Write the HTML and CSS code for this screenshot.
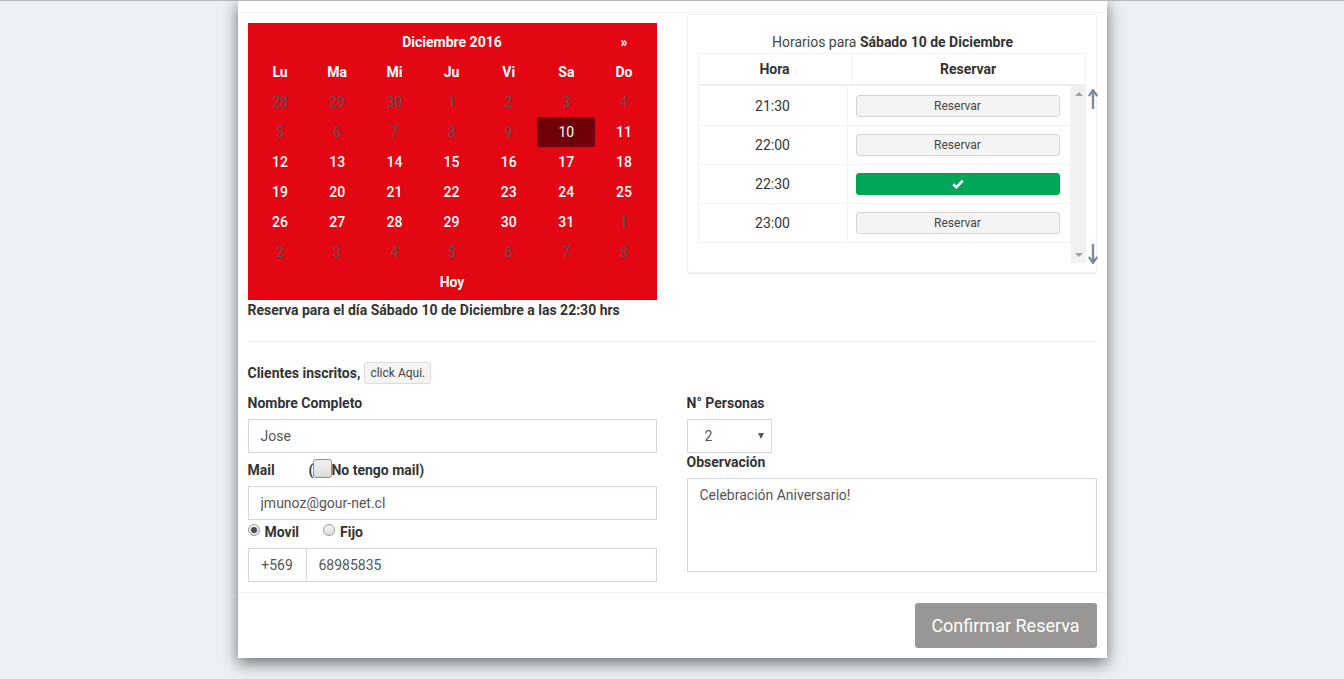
FILE: index.html
```html
<!DOCTYPE html>
<html lang="es">
<head>
<meta charset="utf-8">
<title>Reserva</title>
<link rel="stylesheet" href="styles.css">
</head>
<body>
<div class="modal">
  <div class="modal-header"></div>
  <div class="modal-body">
    <div class="top-row">
      <div class="col-left">
        <div class="calendar">
          <div class="cal-cell"></div>
          <div class="cal-title">Diciembre 2016</div>
          <div class="cal-cell cal-nav">»</div>

          <div class="cal-cell dow">Lu</div><div class="cal-cell dow">Ma</div><div class="cal-cell dow">Mi</div><div class="cal-cell dow">Ju</div><div class="cal-cell dow">Vi</div><div class="cal-cell dow">Sa</div><div class="cal-cell dow">Do</div>

          <div class="cal-cell off">28</div><div class="cal-cell off">29</div><div class="cal-cell off">30</div><div class="cal-cell off">1</div><div class="cal-cell off">2</div><div class="cal-cell off">3</div><div class="cal-cell off">4</div>

          <div class="cal-cell off">5</div><div class="cal-cell off">6</div><div class="cal-cell off">7</div><div class="cal-cell off">8</div><div class="cal-cell off">9</div><div class="cal-cell day"><span class="selected">10</span></div><div class="cal-cell day">11</div>

          <div class="cal-cell day">12</div><div class="cal-cell day">13</div><div class="cal-cell day">14</div><div class="cal-cell day">15</div><div class="cal-cell day">16</div><div class="cal-cell day">17</div><div class="cal-cell day">18</div>

          <div class="cal-cell day">19</div><div class="cal-cell day">20</div><div class="cal-cell day">21</div><div class="cal-cell day">22</div><div class="cal-cell day">23</div><div class="cal-cell day">24</div><div class="cal-cell day">25</div>

          <div class="cal-cell day">26</div><div class="cal-cell day">27</div><div class="cal-cell day">28</div><div class="cal-cell day">29</div><div class="cal-cell day">30</div><div class="cal-cell day">31</div><div class="cal-cell off">1</div>

          <div class="cal-cell off">2</div><div class="cal-cell off">3</div><div class="cal-cell off">4</div><div class="cal-cell off">5</div><div class="cal-cell off">6</div><div class="cal-cell off">7</div><div class="cal-cell off">8</div>

          <div class="cal-today">Hoy</div>
        </div>
        <p class="summary">Reserva para el día Sábado 10 de Diciembre a las 22:30 hrs</p>
      </div>

      <div class="col-right">
        <div class="slots">
          <div class="slots-title">Horarios para <b>Sábado 10 de Diciembre</b></div>
          <div class="slots-head">
            <div class="th th-hora">Hora</div>
            <div class="th th-res">Reservar</div>
          </div>
          <div class="slots-scroll">
            <div class="slots-body">
              <div class="tr"><div class="td td-hora">21:30</div><div class="td td-res"><span class="btn-res">Reservar</span></div></div>
              <div class="tr"><div class="td td-hora">22:00</div><div class="td td-res"><span class="btn-res">Reservar</span></div></div>
              <div class="tr"><div class="td td-hora">22:30</div><div class="td td-res"><span class="btn-res btn-ok"><svg width="12" height="10" viewBox="0 0 12 10"><path d="M1.2 5.2 L4.4 8.2 L10.8 1.6" fill="none" stroke="#fff" stroke-width="2.6" stroke-linejoin="miter"/></svg></span></div></div>
              <div class="tr"><div class="td td-hora">23:00</div><div class="td td-res"><span class="btn-res">Reservar</span></div></div>
            </div>
            <div class="scrollbar">
              <span class="sb-up"></span>
              <span class="sb-down"></span>
            </div>
          </div>
          <svg class="arrow arrow-up" width="10" height="21" viewBox="0 0 10 21"><path d="M5 3 V20" stroke="#7b8b99" stroke-width="2.4"/><path d="M0.8 7 L5 1 L9.2 7" fill="none" stroke="#7b8b99" stroke-width="2.2"/></svg>
          <svg class="arrow arrow-down" width="10" height="21" viewBox="0 0 10 21"><path d="M5 1 V18" stroke="#7b8b99" stroke-width="2.4"/><path d="M0.8 14 L5 20 L9.2 14" fill="none" stroke="#7b8b99" stroke-width="2.2"/></svg>
        </div>
      </div>
    </div>

    <hr class="divider">

    <div class="form-row">
      <div class="form-left">
        <div class="clients"><b>Clientes inscritos,</b><span class="btn-small">click Aqui.</span></div>
        <label class="lbl">Nombre Completo</label>
        <input class="field" type="text" value="Jose">
        <div class="lbl mail-row"><span class="mail-word">Mail</span><span>(</span><span class="fake-check"></span><span>No tengo mail)</span></div>
        <input class="field" type="text" value="jmunoz@gour-net.cl">
        <div class="radios">
          <span class="radio checked"></span><b class="radio-label">Movil</b>
          <span class="radio second"></span><b class="radio-label">Fijo</b>
        </div>
        <div class="input-group">
          <span class="addon">+569</span>
          <input class="field group-field" type="text" value="68985835">
        </div>
      </div>
      <div class="form-right">
        <label class="lbl">N° Personas</label>
        <div class="select"><span>2</span><span class="caret"></span></div>
        <label class="lbl obs-lbl">Observación</label>
        <div class="textarea">Celebración Aniversario!</div>
      </div>
    </div>
  </div>
  <div class="modal-footer">
    <span class="btn-confirm">Confirmar Reserva</span>
  </div>
</div>
</body>
</html>
```

FILE: styles.css
```css
* { box-sizing: border-box; }

html, body {
  margin: 0;
  padding: 0;
}

body {
  background: #ecf0f5;
  border-top: 1px solid #b7b7b7;
  font-family: Roboto, "Liberation Sans", Arial, sans-serif;
  font-size: 14px;
  line-height: 20px;
  color: #333;
  height: 679px;
  overflow: hidden;
}

.modal {
  width: 869px;
  margin: -1px auto 0;
  background: #fff;
  box-shadow: 0 5px 15px rgba(0, 0, 0, 0.55);
}

.modal-header {
  height: 13px;
  border-bottom: 1px solid #f2f2f2;
}

.modal-body {
  padding: 1px 10px 10px;
}

.top-row {
  display: flex;
  gap: 30px;
  align-items: flex-start;
}

.col-left {
  width: 409px;
  padding-top: 9px;
}

.col-right {
  width: 410px;
}

/* calendar */
.calendar {
  background: #e30613;
  padding: 4px 4px 3px;
  display: grid;
  grid-template-columns: repeat(7, 1fr);
  grid-auto-rows: 30px;
  color: #fff;
}

.cal-cell {
  display: flex;
  align-items: center;
  justify-content: center;
  position: relative;
}

.cal-title {
  grid-column: span 5;
  display: flex;
  align-items: center;
  justify-content: center;
  font-weight: 700;
}

.cal-nav { font-weight: 700; }

.dow { font-weight: 700; }

.day { font-weight: 500; }

.off { color: #5d5253; }

.selected {
  display: flex;
  align-items: center;
  justify-content: center;
  width: 58px;
  height: 30px;
  background: #6f0009;
  border-radius: 3px;
  font-weight: 400;
}

.cal-today {
  grid-column: span 7;
  display: flex;
  align-items: center;
  justify-content: center;
  font-weight: 700;
}

.summary {
  margin: 0;
  font-weight: 700;
  line-height: 20px;
  color: #333;
}

/* slots */
.slots {
  position: relative;
  border: 1px solid #f1f1f1;
  border-radius: 3px;
  box-shadow: 0 1px 1px rgba(0, 0, 0, 0.08);
  padding: 10px 10px 9px;
}

.slots-title {
  text-align: center;
  margin-top: 7px;
  margin-bottom: 1px;
  padding-left: 2px;
  color: #444;
}

.slots-title b { color: #333; }

.slots-head {
  display: flex;
  height: 33px;
  border: 1px solid #f2f2f2;
  border-bottom: 2px solid #eee;
}

.th {
  display: flex;
  align-items: center;
  justify-content: center;
  font-weight: 700;
  padding-bottom: 1px;
}

.th-hora {
  width: 153px;
  border-right: 1px solid #f2f2f2;
}

.th-res { flex: 1; }

.slots-scroll {
  display: flex;
  height: 177px;
}

.slots-body {
  width: 373px;
  padding-top: 1px;
}

.tr {
  display: flex;
  height: 39px;
  border-bottom: 1px solid #f2f2f2;
  border-left: 1px solid #f2f2f2;
  border-right: 1px solid #f2f2f2;
}

.td {
  display: flex;
  align-items: center;
}

.td-hora {
  width: 149px;
  justify-content: center;
  border-right: 1px solid #f2f2f2;
}

.td-res {
  flex: 1;
  padding: 0 9px 0 8px;
}

.btn-res {
  display: flex;
  align-items: center;
  justify-content: center;
  width: 204px;
  height: 22px;
  background: #f4f4f4;
  border: 1px solid #d5d5d5;
  border-radius: 3px;
  font-size: 12px;
  color: #444;
}

.btn-ok {
  background: #00a65a;
  border-color: #00a152;
}

.scrollbar {
  width: 15px;
  background: #f1f1f1;
  position: relative;
}

.sb-up, .sb-down {
  position: absolute;
  left: 4px;
  width: 0;
  height: 0;
  border-left: 4px solid transparent;
  border-right: 4px solid transparent;
}

.sb-up {
  top: 6px;
  border-bottom: 4px solid #a3a3a3;
}

.sb-down {
  bottom: 6px;
  border-top: 4px solid #a3a3a3;
}

.arrow {
  position: absolute;
  right: -2px;
}

.arrow-up { top: 74px; }

.arrow-down { top: 228px; }

/* divider */
.divider {
  margin: 21px 0 20px;
  border: 0;
  border-top: 1px solid #eee;
  height: 0;
}

/* form */
.form-row {
  display: flex;
  gap: 30px;
  align-items: flex-start;
}

.form-left {
  width: 409px;
}

.form-right {
  width: 410px;
  padding-top: 31px;
}

.clients {
  display: flex;
  align-items: center;
  gap: 4px;
  height: 22px;
  margin-bottom: 9px;
}

.btn-small {
  display: inline-flex;
  align-items: center;
  height: 22px;
  padding: 0 5px;
  background: #f4f4f4;
  border: 1px solid #ddd;
  border-radius: 3px;
  font-size: 12px;
  color: #444;
}

.lbl {
  display: block;
  font-weight: 700;
  line-height: 20px;
  margin-bottom: 6px;
}

.field {
  display: block;
  width: 100%;
  height: 34px;
  border: 1px solid #d2d6de;
  padding: 0 12px;
  font-family: Roboto, "Liberation Sans", Arial, sans-serif;
  font-size: 14px;
  color: #555;
  background: #fff;
  outline: none;
  margin: 0;
}

.mail-row {
  display: flex;
  align-items: center;
  margin-top: 7px;
}

.mail-word {
  width: 61px;
}

.fake-check {
  display: inline-block;
  width: 19px;
  height: 19px;
  border: 1px solid #8f8f8f;
  border-radius: 3px;
  background: linear-gradient(#f2f2f2, #dcdcdc);
  margin: -3px -1px 0 0;
}

.radios {
  display: flex;
  align-items: center;
  height: 22px;
  margin-bottom: 6px;
  padding-top: 2px;
}

.radio {
  display: inline-block;
  width: 12px;
  height: 12px;
  border: 1px solid #9a9a9a;
  border-radius: 50%;
  background: linear-gradient(#f4f4f4, #dddddd);
  position: relative;
  margin-top: -5px;
}

.radio.checked::after {
  content: "";
  position: absolute;
  left: 2px;
  top: 2px;
  width: 6px;
  height: 6px;
  border-radius: 50%;
  background: #4d4d4d;
}

.radio.second {
  margin-left: 24px;
}

.radio-label {
  margin-left: 5px;
}

.input-group {
  display: flex;
}

.addon {
  display: flex;
  align-items: center;
  justify-content: center;
  width: 58px;
  height: 34px;
  border: 1px solid #d2d6de;
  border-right: 0;
  color: #555;
}

.group-field {
  flex: 1;
  width: auto;
}

.select {
  display: flex;
  align-items: center;
  justify-content: space-between;
  width: 85px;
  height: 34px;
  border: 1px solid #d2d6de;
  padding: 0 7px 0 17px;
  color: #555;
}

.caret {
  width: 0;
  height: 0;
  border-left: 3px solid transparent;
  border-right: 3px solid transparent;
  border-top: 6px solid #555;
}

.obs-lbl {
  margin-top: -1px;
}

.textarea {
  height: 94px;
  border: 1px solid #d2d6de;
  padding: 6px 12px;
  color: #555;
}

/* footer */
.modal-footer {
  border-top: 1px solid #f2f2f2;
  padding: 10px;
  display: flex;
  justify-content: flex-end;
}

.btn-confirm {
  display: flex;
  align-items: center;
  justify-content: center;
  width: 182px;
  height: 45px;
  background: #999795;
  border-radius: 3px;
  color: #fff;
  font-size: 18px;
}
```
